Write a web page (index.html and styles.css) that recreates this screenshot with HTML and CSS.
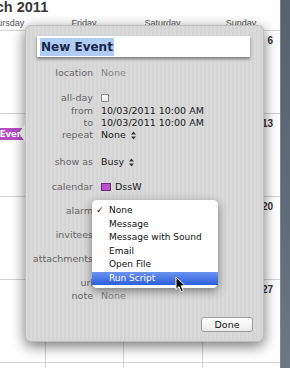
FILE: index.html
```html
<!DOCTYPE html>
<html lang="en">
  <head>
    <meta charset="UTF-8" />
    <title>iCal - New Event</title>
    <link rel="stylesheet" href="styles.css">
  </head>
  <body>
    <div class="screen">
      <!-- Month view behind the popover -->
      <div class="calendar">
        <div class="month-title">March 2011</div>
        <div class="weekdays">
          <div>Thursday</div>
          <div>Friday</div>
          <div>Saturday</div>
          <div>Sunday</div>
        </div>
        <div class="weeks">
          <div class="cell"><span class="num">3</span></div>
          <div class="cell"><span class="num">4</span></div>
          <div class="cell"><span class="num">5</span></div>
          <div class="cell"><span class="num">6</span></div>

          <div class="cell">
            <span class="num">10</span>
            <div class="event">New Event</div>
          </div>
          <div class="cell"><span class="num">11</span></div>
          <div class="cell"><span class="num">12</span></div>
          <div class="cell"><span class="num">13</span></div>

          <div class="cell"><span class="num">17</span></div>
          <div class="cell"><span class="num">18</span></div>
          <div class="cell"><span class="num">19</span></div>
          <div class="cell"><span class="num">20</span></div>

          <div class="cell"><span class="num">24</span></div>
          <div class="cell"><span class="num">25</span></div>
          <div class="cell"><span class="num">26</span></div>
          <div class="cell"><span class="num">27</span></div>

          <div class="cell"><span class="num">31</span></div>
          <div class="cell"><span class="num">1</span></div>
          <div class="cell"><span class="num">2</span></div>
          <div class="cell"><span class="num">3</span></div>
        </div>
      </div>
      <div class="desktop"></div>

      <!-- Event editor popover -->
      <div class="popover">
        <div class="title-field"><span class="title-text">New Event</span></div>

        <div class="form">
          <div class="row">
            <span class="label">location</span><span class="value muted">None</span>
          </div>
          <div class="row gap-md">
            <span class="label">all-day</span><span class="checkbox"></span>
          </div>
          <div class="row gap-xs">
            <span class="label">from</span><span class="value">10/03/2011 10:00 AM</span>
          </div>
          <div class="row">
            <span class="label">to</span><span class="value">10/03/2011 10:00 AM</span>
          </div>
          <div class="row">
            <span class="label">repeat</span>
            <span class="value">None</span>
            <svg class="stepper" width="5" height="9" viewBox="0 0 5 9"><path d="M0 3.6L2.5 0.4L5 3.6Z M0 5.4L2.5 8.6L5 5.4Z" /></svg>
          </div>
          <div class="row gap-lg">
            <span class="label">show as</span>
            <span class="value">Busy</span>
            <svg class="stepper" width="5" height="9" viewBox="0 0 5 9"><path d="M0 3.6L2.5 0.4L5 3.6Z M0 5.4L2.5 8.6L5 5.4Z" /></svg>
          </div>
          <div class="row gap-md">
            <span class="label">calendar</span>
            <span class="swatch"></span><span class="value">DssW</span>
          </div>
          <div class="row gap">
            <span class="label">alarm</span>
          </div>
          <div class="row gap">
            <span class="label">invitees</span>
          </div>
          <div class="row gap">
            <span class="label">attachments</span>
          </div>
          <div class="row gap">
            <span class="label">url</span>
          </div>
          <div class="row gap-xs">
            <span class="label">note</span><span class="value muted">None</span>
          </div>
        </div>

        <div class="actions">
          <button class="done-btn">Done</button>
        </div>
      </div>

      <!-- Alarm popup menu (open) -->
      <div class="menu">
        <div class="menu-item"><span class="check">✓</span>None</div>
        <div class="menu-item"><span class="check"></span>Message</div>
        <div class="menu-item"><span class="check"></span>Message with Sound</div>
        <div class="menu-item"><span class="check"></span>Email</div>
        <div class="menu-item"><span class="check"></span>Open File</div>
        <div class="menu-item selected"><span class="check"></span>Run Script</div>
      </div>

      <svg class="cursor" width="11" height="17" viewBox="0 0 11 17">
        <path d="M1 1L1 13.5L4 10.6L6.1 15.6L8.3 14.7L6.2 9.8L10.2 9.8Z" fill="#000" stroke="#fff" stroke-width="1" stroke-linejoin="round" />
      </svg>
    </div>
  </body>
</html>
```

FILE: styles.css
```css
body {
  margin: 0;
  padding: 0;
  background-color: #fff;
  font-family: "DejaVu Sans", sans-serif;
}

.screen {
  position: relative;
  display: flex;
  width: 290px;
  height: 368px;
  overflow: hidden;
}

/* Month view */
.calendar {
  flex: none;
  width: 314px;
  margin-left: -34px; /* window is scrolled, Thursday is cut off */
  background-color: #fff;
}

.month-title {
  height: 16px;
  padding-left: 4px;
  font-family: "Liberation Sans", Arial, sans-serif;
  font-weight: bold;
  font-size: 14.5px;
  line-height: 14px;
  color: #383838;
}

.weekdays,
.weeks {
  display: grid;
  grid-template-columns: 79px 78px 79px 78px;
}

.weekdays {
  height: 14px;
  font-family: "Liberation Sans", Arial, sans-serif;
  font-size: 9px;
  line-height: 14px;
  color: #555;
  text-align: center;
}

.weeks {
  grid-auto-rows: 83px;
}

.cell {
  border-top: 1px solid #d4d4d4;
  border-left: 1px solid #d4d4d4;
  padding-top: 5px;
  text-align: right;
}

.num {
  display: block;
  padding-right: 7px;
  font-family: "Liberation Sans", Arial, sans-serif;
  font-weight: bold;
  font-size: 10px;
  line-height: 10px;
  color: #333;
}

.event {
  margin: -1px 2px 0 1px;
  padding-left: 8px;
  height: 12px;
  background-color: #b44cc4;
  color: #fff;
  font-weight: bold;
  font-size: 8.5px;
  line-height: 12px;
  text-align: left;
  white-space: nowrap;
}

.desktop {
  flex: 1;
  border-left: 1px solid #7d8690;
  background: linear-gradient(180deg, #56636f 0%, #5f6c79 60%, #6c7884 100%);
}

/* Popover */
.popover {
  position: absolute;
  left: 25px;
  top: 25px;
  width: 239px;
  height: 317px;
  box-sizing: border-box;
  border-radius: 6px;
  border: 1px solid rgba(0, 0, 0, 0.12);
  background:
    repeating-linear-gradient(90deg, rgba(255, 255, 255, 0.12) 0 2px, rgba(255, 255, 255, 0) 2px 4px),
    #d5d5d5;
  box-shadow: 0 4px 14px rgba(0, 0, 0, 0.55);
}

/* little arrow pointing at the event */
.popover::before {
  content: "";
  position: absolute;
  left: -7px;
  top: 98px;
  border-right: 6px solid #d7d7d7;
  border-top: 9px solid transparent;
  border-bottom: 9px solid transparent;
}

.title-field {
  display: flex;
  align-items: center;
  height: 21px;
  margin: 10px 13px 0 11px;
  padding-left: 3px;
  background-color: #fff;
  box-shadow: 0 2px 3px rgba(0, 0, 0, 0.45);
}

.title-text {
  padding: 0 1px;
  line-height: 18px;
  background-color: #b1ccf2;
  color: #18264a;
  font-weight: bold;
  font-size: 12px;
}

.form {
  padding-top: 10px;
  font-size: 9.5px;
}

.row {
  display: flex;
  align-items: center;
  height: 12px;
  line-height: 12px;
}

.row.gap-xs {
  margin-top: 1px;
}

.row.gap {
  margin-top: 12px;
}

.row.gap-md {
  margin-top: 13px;
}

.row.gap-lg {
  margin-top: 15px;
}

.label {
  flex: none;
  width: 67px; /* right edge lines up at x=93 */
  margin-right: 8px;
  text-align: right;
  color: #666;
  white-space: nowrap;
}

.value {
  color: #1a1a1a;
  white-space: nowrap;
}

.value.muted {
  color: #888;
}

.checkbox {
  width: 6px;
  height: 6px;
  border: 1px solid #8a8a8a;
  border-radius: 1px;
  background: linear-gradient(#fff, #e9e9e9);
}

.stepper {
  margin-left: 5px;
  fill: #3a3a3a;
}

.swatch {
  width: 8px;
  height: 6px;
  margin-right: 4px;
  border: 1px solid #6f2b7c;
  background-color: #bb52c9;
}

.actions {
  display: flex;
  justify-content: flex-end;
  margin-top: 15px;
  padding-right: 10px;
}

.done-btn {
  width: 52px;
  height: 15px;
  padding: 0;
  border: 1px solid #9c9c9c;
  border-radius: 3px;
  background: linear-gradient(#ffffff, #ececec);
  font-family: "DejaVu Sans", sans-serif;
  font-size: 9.5px;
  line-height: 13px;
  color: #111;
}

/* Alarm popup menu */
.menu {
  position: absolute;
  left: 92px;
  top: 200px;
  width: 126px;
  padding: 4px 0 3px;
  border-radius: 5px;
  background-color: rgba(255, 255, 255, 0.97);
  box-shadow: 0 3px 10px rgba(0, 0, 0, 0.45);
  font-size: 9px;
  color: #111;
}

.menu-item {
  display: flex;
  height: 13.5px;
  line-height: 13.5px;
  padding-left: 4px;
  white-space: nowrap;
}

.menu-item.selected {
  background: linear-gradient(#6a93f0, #2e5fdc);
  color: #fff;
}

.check {
  width: 13px;
  flex: none;
}

.cursor {
  position: absolute;
  left: 175px;
  top: 276px;
}
```
